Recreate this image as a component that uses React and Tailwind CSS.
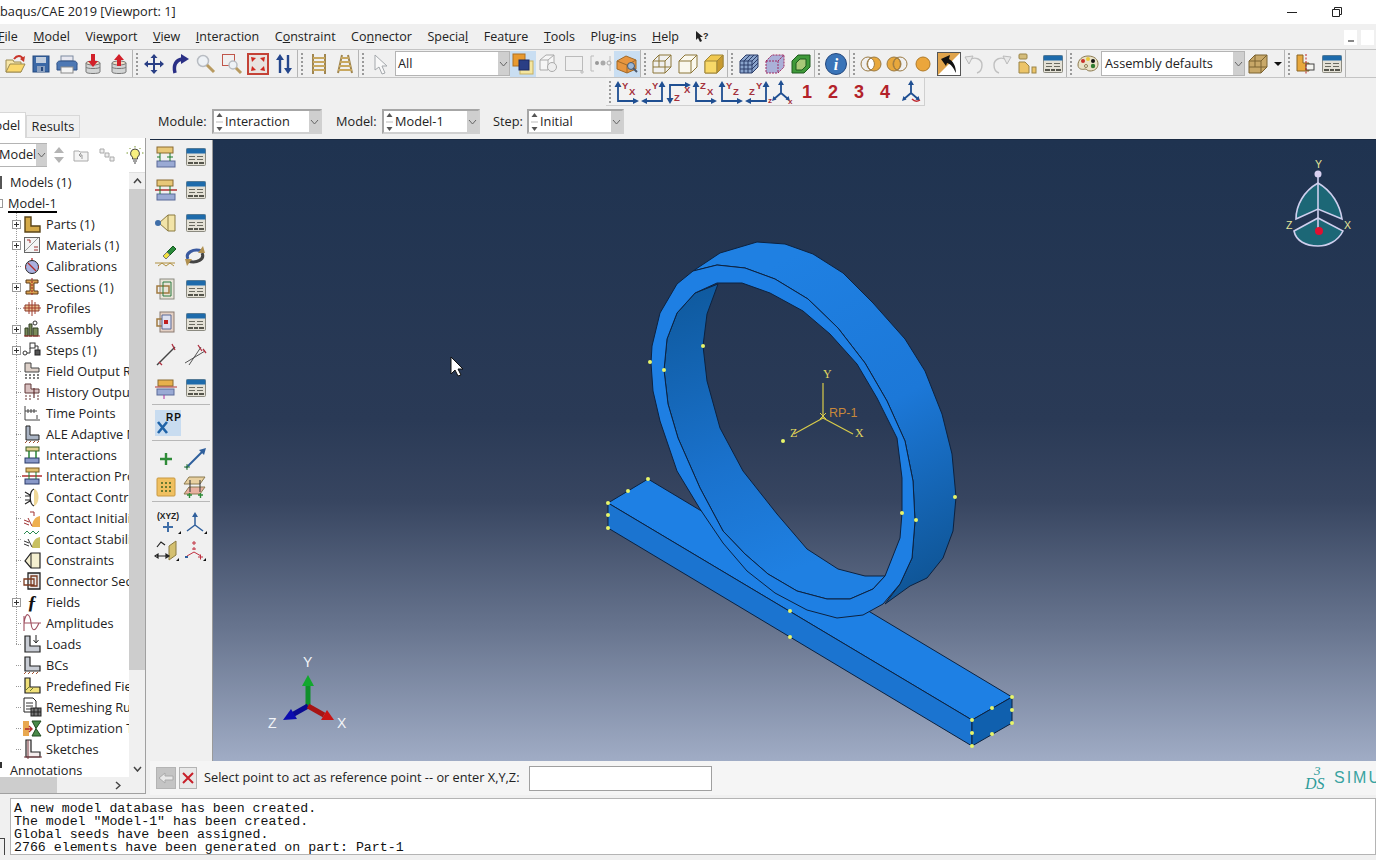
import React from 'react';

const UI = '"Open Sans", "Noto Sans", sans-serif';

const Ico = ({ w = 22, h = 22, children }) => (
  <svg width={w} height={h} viewBox={`0 0 ${w} ${h}`} className="shrink-0">{children}</svg>
);

const Table = () => (
  <Ico>
    <rect x="1.5" y="2.5" width="19" height="17" rx="1" fill="#e4e1d6" stroke="#8b8a80" />
    <rect x="1.5" y="2.5" width="19" height="5" fill="#1e6bab" />
    <path d="M4 10.500h6M12 10.500h6M4 13.500h6M12 13.500h6" stroke="#6a6a60" />
    <path d="M3 17h5M9 17h4M14 17h5" stroke="#55554c" strokeWidth="2" />
  </Ico>
);
const Open = () => (
  <Ico>
    <path d="M2 7h7l1 2h7v10H2z" fill="#f7e6a8" stroke="#9c8a50" />
    <path d="M2 19l4-8h15l-4 8z" fill="#fbd86c" stroke="#9c8a50" />
    <path d="M10 6c3-4 7-4 9 0" fill="none" stroke="#c8342a" strokeWidth="2" />
    <path d="M21 3l-1 6-4-3z" fill="#c8342a" />
  </Ico>
);
const Save = () => (
  <Ico>
    <rect x="3" y="3" width="16" height="16" fill="#3b68a6" stroke="#25487e" />
    <rect x="6" y="4" width="10" height="6" fill="#c3cfdf" />
    <rect x="7" y="13" width="8" height="6" fill="#8ba0bf" />
    <rect x="11" y="14" width="2" height="4" fill="#25487e" />
  </Ico>
);
const Print = () => (
  <Ico>
    <rect x="5" y="3" width="12" height="5" fill="#e8e8f0" stroke="#7d8aa0" />
    <path d="M1 12a3 3 0 013-4h14a3 3 0 013 4v5H1z" fill="#4d78b4" stroke="#2f5186" />
    <rect x="5" y="14" width="12" height="6" fill="#f4f4f4" stroke="#8a8a8a" />
  </Ico>
);
const Db = ({ up }) => (
  <Ico>
    <path d="M4 10v9c0 2 14 2 14 0v-9z" fill="#d2d4d4" stroke="#777" />
    <path d="M4 14c0 2 14 2 14 0" fill="none" stroke="#777" />
    <ellipse cx="11" cy="10" rx="7" ry="2" fill="#ecdcc4" stroke="#777" />
    <path d={up ? 'M11 1l5 6h-3v6H9V7H6z' : 'M9 1h4v7h3l-5 6-5-6h3z'} fill="#d2202a" />
  </Ico>
);
const Move = () => (
  <Ico>
    <path d="M11 2v18M2 11h18" stroke="#2a3f85" strokeWidth="2" />
    <path d="M11 1l3.500 4h-7zM11 21l3.500-4h-7zM1 11l4-3.500v7zM21 11l-4-3.500v7z" fill="#2a3f85" />
  </Ico>
);
const Rotate = () => (
  <Ico>
    <path d="M6 20C4 12 7 7 13 6" fill="none" stroke="#2a2f85" strokeWidth="3.5" />
    <path d="M12 1l8 5-8 5z" fill="#2a2f85" />
  </Ico>
);
const Glass = () => (
  <Ico>
    <circle cx="8" cy="8" r="5.5" fill="#eef2f6" stroke="#b8bcc2" strokeWidth="1.5" />
    <path d="M12 12l7 7" stroke="#b89a60" strokeWidth="3" />
  </Ico>
);
const BoxZoom = () => (
  <Ico>
    <rect x="1.5" y="1.5" width="12" height="11" fill="none" stroke="#c0564a" />
    <circle cx="12" cy="12" r="4" fill="#eef2f6" stroke="#b8bcc2" strokeWidth="1.5" />
    <path d="M15 15l5 5" stroke="#b89a60" strokeWidth="3" />
  </Ico>
);
const Fit = () => (
  <Ico>
    <rect x="1" y="1" width="20" height="20" fill="#e8e4e0" stroke="#c44236" strokeWidth="2" />
    <path d="M4 4l5 1-4 4zM18 4l-5 1 4 4zM4 18l5-1-4-4zM18 18l-5-1 4-4z" fill="#d02a20" />
  </Ico>
);
const Swap = () => (
  <Ico>
    <path d="M7 20V5M15 2v15" stroke="#24468c" strokeWidth="2.4" />
    <path d="M7 1l4 6H3zM15 21l4-6h-8z" fill="#24468c" />
  </Ico>
);
const Ladder = ({ t }) => (
  <Ico>
    {t ? (
      <path d="M8 2L4 20M14 2l4 18" stroke="#a08650" strokeWidth="2" />
    ) : (
      <path d="M5 1v20M17 1v20" stroke="#a08650" strokeWidth="2" />
    )}
    <path d={t ? 'M7 5h8M6 9h10M5 13h12M4 17h14' : 'M5 5h12M5 9h12M5 13h12M5 17h12'} stroke="#c8a860" strokeWidth="2" />
  </Ico>
);
const Cursor = () => (
  <Ico>
    <path d="M4 2v15l4-3 3 7 3-1-3-7h5z" fill="#f8f8f8" stroke="#a4a8ac" />
  </Ico>
);
const Overlap = () => (
  <Ico>
    <rect x="8" y="8" width="13" height="13" fill="#f4e6a0" stroke="#c8b060" />
    <rect x="1" y="1" width="12" height="12" fill="#e89a30" stroke="#b07020" />
    <rect x="7" y="7" width="10" height="10" fill="#2a3f85" stroke="#1a2860" />
  </Ico>
);
const GreyCube = () => (
  <Ico>
    <path d="M2 7l6-5h8v9l-6 6H2zM2 7h8v10M10 7l6-5" fill="#f6f6f6" stroke="#aaa" />
    <circle cx="14" cy="14" r="4.5" fill="#eee" stroke="#aaa" />
  </Ico>
);
const DashRect = () => (
  <Ico>
    <rect x="1.5" y="3.5" width="17" height="14" fill="none" stroke="#bbb" />
    <path d="M18 17v4M16 19h4" stroke="#bbb" />
  </Ico>
);
const NodesG = () => (
  <Ico>
    <path d="M1 3v15M1 3h3M1 18h3M20 3v15" stroke="#bbb" fill="none" />
    <circle cx="7" cy="10" r="2" fill="#999" />
    <circle cx="13" cy="10" r="2.5" fill="#aaa" />
    <circle cx="19" cy="10" r="2" fill="#eee" stroke="#aaa" />
  </Ico>
);
const OrangeBox = () => (
  <Ico>
    <path d="M1 8l9-5 10 4v9l-9 4-10-4z" fill="#e89640" stroke="#a06a2a" />
    <path d="M1 8l10 4 9-5M11 12v8" fill="none" stroke="#a06a2a" />
    <circle cx="15" cy="13" r="3.5" fill="#9cb8d8" stroke="#4a5a70" />
    <path d="M17 15l4 4" stroke="#4a5a70" strokeWidth="2" />
  </Ico>
);
const WireCube = () => (
  <Ico>
    <path d="M2 8l6-6h12v12l-6 6H2zM2 8h12v12M14 8l6-6M8 2v12H2M8 14h12" fill="none" stroke="#8c7638" />
  </Ico>
);
const HideCube = () => (
  <Ico>
    <path d="M2 8l6-6h12v12l-6 6H2zM2 8h12v12M14 8l6-6" fill="#faf8ee" stroke="#8c7638" />
  </Ico>
);
const ShadeCube = () => (
  <Ico>
    <path d="M2 8l6-6h12v12l-6 6H2z" fill="#f0c850" stroke="#a08638" />
    <path d="M2 8h12v12H2z" fill="#f8d868" stroke="#a08638" />
    <path d="M14 8l6-6v12l-6 6z" fill="#c89a30" stroke="#a08638" />
  </Ico>
);
const MeshCube = () => (
  <Ico>
    <path d="M2 8l6-6h12v12l-6 6H2z" fill="#8aa4cc" stroke="#2a3c68" />
    <path d="M2 8h12v12M14 8l6-6M6 8v12M10 8v12M2 12h12M2 16h12M14 12l6-6M14 16l6-6M6 8l6-6M10 8l6-6" fill="none" stroke="#2a3c68" />
  </Ico>
);
const DashCube = () => (
  <Ico>
    <path d="M2 8l6-6h12v12l-6 6H2z" fill="#aab0d8" stroke="#a02860" strokeDasharray="2 1" />
    <path d="M2 8h12v12M14 8l6-6" fill="none" stroke="#a02860" strokeDasharray="2 1" />
  </Ico>
);
const GreenCube = () => (
  <Ico>
    <path d="M2 8l6-6h12v12l-6 6H2z" fill="#3f9a3a" stroke="#1f5a1e" />
    <path d="M6 10l4-4h6v7l-4 4H6z" fill="#a8c878" stroke="#1f5a1e" />
  </Ico>
);
const Info = () => (
  <svg width="24" height="24" viewBox="0 0 24 24" className="shrink-0">
    <circle cx="12" cy="12" r="10.5" fill="#3a74b8" stroke="#24487e" />
    <text x="12" y="18" textAnchor="middle" fontSize="16" fontWeight="700" fontStyle="italic" fill="#fff" fontFamily="Liberation Serif, serif">i</text>
  </svg>
);
const Rings = ({ m }) => (
  <Ico>
    <circle cx="8" cy="11" r="7" fill={m === 'l' ? '#e8a83c' : 'none'} stroke="#9a7a44" />
    <circle cx="14" cy="11" r="7" fill={m === 'r' ? '#e8a83c' : 'none'} stroke="#9a7a44" />
    <path d="M11 5a7 7 0 010 12 7 7 0 010-12z" fill={m === 'r' ? '#fff' : '#e8a83c'} stroke="#9a7a44" />
  </Ico>
);
const Ball = () => (
  <Ico>
    <circle cx="11" cy="11" r="7" fill="#eba63c" stroke="#b07a28" />
  </Ico>
);
const PickArrow = () => (
  <Ico w={24} h={24}>
    <rect x="0.5" y="0.5" width="23" height="23" fill="#fff" stroke="#555" />
    <path d="M1 1h22L1 23z" fill="#e0a44c" />
    <path d="M4 7l9-4-1 4c4 2 7 7 7 14-3-6-5-9-9-10l-1 3z" fill="#111" />
  </Ico>
);
const Undo = ({ r }) => (
  <Ico>
    <g transform={r ? 'matrix(-1 0 0 1 22 0)' : ''}>
      <path d="M5 7c6-4 13-1 13 5 0 4-2 7-5 8" fill="none" stroke="#c0c0c0" strokeWidth="1.4" />
      <path d="M1 4l8-1-4 8z" fill="#e8e8e8" stroke="#bbb" />
    </g>
  </Ico>
);
const Parts = () => (
  <Ico>
    <rect x="3" y="1" width="8" height="5" rx="1" fill="#d4bc7a" stroke="#9a8448" />
    <path d="M3 9h6l4 4v7H3z" fill="#ecc468" stroke="#9a8448" />
    <rect x="16" y="14" width="4" height="6" fill="#ecc468" stroke="#9a8448" />
  </Ico>
);
const Palette = () => (
  <Ico>
    <path d="M11 3c6 0 10 3 10 8 0 4-3 7-8 7-3 0-3-2-5-2-3 1-7 0-7-4 0-5 4-9 10-9z" fill="#e9e2c8" stroke="#8c7a50" />
    <circle cx="6" cy="8" r="2" fill="#c8302a" />
    <circle cx="11" cy="6" r="2" fill="#e8c83a" />
    <circle cx="16" cy="8" r="2" fill="#111" />
    <circle cx="16" cy="13" r="2.2" fill="#2f7a30" />
    <circle cx="9" cy="13" r="1.5" fill="#f6f0dc" stroke="#8c7a50" />
  </Ico>
);
const TanCube = () => (
  <Ico>
    <path d="M2 8l6-6h12v12l-6 6H2z" fill="#c8a868" stroke="#7a6230" />
    <path d="M2 8h12v12M14 8l6-6M8 2v12H2M8 14h12" fill="none" stroke="#7a6230" />
  </Ico>
);
const Caret = () => (
  <svg width="13" height="22" viewBox="0 0 13 22" className="shrink-0"><path d="M3 9h8l-4 4z" fill="#111" /></svg>
);
const LCut = () => (
  <Ico>
    <path d="M2 2h6v8h6v8H2z" fill="#e8a83c" stroke="#8a6424" />
    <rect x="11" y="11" width="8" height="6" fill="#f4f4f0" stroke="#444" />
    <path d="M11 1v20" stroke="#c02020" strokeDasharray="2 1.5" />
  </Ico>
);
const AxisIco = ({ d, head, a, b }) => (
  <svg width="26" height="24" viewBox="0 0 26 24" className="shrink-0">
    <path d={d} fill="none" stroke="#1f4f92" strokeWidth="1.8" />
    <path d={head} fill="#1f4f92" />
    <text x={a[1]} y={a[2]} fontSize="9.5" fontWeight="700" fill="#a4303c" fontFamily="Liberation Sans, sans-serif">{a[0]}</text>
    <text x={b[1]} y={b[2]} fontSize="9.5" fontWeight="700" fill="#a4303c" fontFamily="Liberation Sans, sans-serif">{b[0]}</text>
  </svg>
);
const Tri3 = ({ twist }) => (
  <svg width="26" height="24" viewBox="0 0 26 24" className="shrink-0">
    <path d="M13 3v11M13 13l-7 6M13 13l7 6" stroke="#1f4f92" strokeWidth="1.8" />
    <path d="M13 0l3 5h-6zM4 21l1.500-5 3 3.500zM22 21l-1.500-5-3 3.500z" fill="#1f4f92" />
    {twist ? (
      <path d="M14 19c3 3 5 3 8 1" fill="none" stroke="#c02a30" strokeWidth="1.5" />
    ) : (
      <>
        <text x="0" y="23" fontSize="8" fontWeight="700" fill="#a4303c" fontFamily="Liberation Sans, sans-serif">z</text>
        <text x="20" y="24" fontSize="8" fontWeight="700" fill="#a4303c" fontFamily="Liberation Sans, sans-serif">x</text>
      </>
    )}
  </svg>
);

const Grip = () => (
  <div className="w-[8px] h-full flex flex-col items-center justify-center gap-[2px] shrink-0">
    {[0, 1, 2, 3, 4, 5].map((i) => <i key={i} className="block w-[2px] h-[2px] bg-[#9a9a9a]" />)}
  </div>
);
const Btn = ({ on, children }) => (
  <div className={`w-[26px] h-[26px] flex items-center justify-center shrink-0 ${on ? 'bg-[#c9def2]' : ''}`}>{children}</div>
);
const Group = ({ children, className = '' }) => (
  <div className={`flex items-center h-full border-r border-[#b5b5b5] ${className}`}>{children}</div>
);
const Arrow = () => (
  <div className="w-[11px] h-full bg-[#cfcfcf] flex items-center justify-center shrink-0">
    <svg width="9" height="6" viewBox="0 0 9 6"><path d="M1 1l3.500 4L8 1" fill="none" stroke="#666" /></svg>
  </div>
);
const Spin = () => (
  <svg width="9" height="22" viewBox="0 0 9 22" className="shrink-0 ml-[1px]">
    <path d="M4.500 2l3 4h-6zM4.500 20l3-4h-6z" fill="#555" />
    <path d="M1 11h7" stroke="#bbb" />
  </svg>
);
const Combo = ({ w, label }) => (
  <div className={`${w} h-[25px] flex items-center bg-white border-2 border-[#a6a6a6] border-r-[#d0d0d0] border-b-[#d0d0d0]`}>
    <Spin />
    <span className="ml-[1px] flex-1 whitespace-nowrap">{label}</span>
    <Arrow />
  </div>
);

const Dots = () => <i className="absolute left-[16px] top-[10px] w-[9px] border-t border-dotted border-[#999]" />;

const treeIcons = {
  parts: <path d="M3 3h6v9h9v6H3z" fill="#d4a948" stroke="#5a4418" strokeWidth="1.4" />,
  mat: (
    <>
      <rect x="2.5" y="2.5" width="15" height="15" fill="#f4f4f4" stroke="#666" />
      <path d="M3 16l13-13" stroke="#999" />
      <path d="M5 5h3v3M12 12h4M12 15h4" stroke="#a03030" fill="none" />
    </>
  ),
  cal: (
    <>
      <circle cx="10" cy="11" r="6.5" fill="#aab0e0" stroke="#222" />
      <path d="M6 7l8 8M10 2v2M3 11h1M16 11h1" stroke="#b02a2a" strokeWidth="1.3" />
    </>
  ),
  sec: (
    <>
      <path d="M4 3h12v3h-4v8h4v3H4v-3h4V6H4z" fill="#d9a050" stroke="#5a3a18" />
      <path d="M10 1v18" stroke="#a02020" strokeDasharray="2 1" />
    </>
  ),
  prof: (
    <>
      <path d="M3 7h14v6H3z" fill="#e8c090" stroke="#8a3a2a" />
      <path d="M10 2v16M1 10h18M7 4v12M13 4v12" stroke="#a03a2a" />
    </>
  ),
  asm: (
    <>
      <path d="M3 17V9h3v8zM7 17V5h3v12zM11 17V9h5v8z" fill="#7a8a5a" stroke="#2f3a20" />
      <circle cx="13" cy="4" r="2" fill="#fff" stroke="#333" />
      <path d="M2 17h16" stroke="#a03030" />
    </>
  ),
  steps: (
    <>
      <circle cx="3" cy="13" r="2" fill="#fff" stroke="#333" />
      <rect x="8" y="3" width="5" height="5" fill="#fff" stroke="#333" />
      <rect x="13" y="10" width="5" height="5" fill="#555" stroke="#222" />
      <path d="M5 13h3V8M13 6h3v4" fill="none" stroke="#333" />
    </>
  ),
  field: (
    <>
      <path d="M3 2h6v5h8v4H3z" fill="#ddd0c8" stroke="#444" />
      <path d="M3 14h2M7 14h2M11 14h2M15 14h2M3 17h2M7 17h2M11 17h2M15 17h2" stroke="#555" strokeWidth="1.4" />
    </>
  ),
  hist: (
    <>
      <path d="M3 2h6v5h8v4H3z" fill="#d8c0c0" stroke="#603838" />
      <path d="M12 6v10M3 14h2M7 14h2M15 14h2M3 17h2M7 17h2M15 17h2" stroke="#633" strokeWidth="1.2" />
    </>
  ),
  time: <path d="M3 3v14h15M3 8h12M6 6v4M9 6v4M12 6v4M15 12v4" fill="none" stroke="#444" />,
  ale: (
    <>
      <path d="M4 2h4v9h9v5H4z" fill="#aab4c4" stroke="#222" />
      <path d="M3 19l2-2M7 19l2-2M11 19l2-2M15 19l2-2" stroke="#a05030" />
    </>
  ),
  inter: (
    <>
      <rect x="4" y="2" width="13" height="4" fill="#e0d090" stroke="#3a5a20" />
      <rect x="3" y="13" width="14" height="5" fill="#8898c8" stroke="#2a3a68" />
      <path d="M7 6v7M14 6v7" stroke="#1a7a2a" strokeWidth="1.4" />
    </>
  ),
  iprop: (
    <>
      <rect x="4" y="2" width="13" height="4" fill="#e0c070" stroke="#7a5a20" />
      <rect x="3" y="13" width="14" height="5" fill="#8898c8" stroke="#2a3a68" />
      <path d="M0 10h20" stroke="#b03030" strokeWidth="1.5" />
      <path d="M7 6v7M14 6v7" stroke="#1a7a2a" />
    </>
  ),
  cc: (
    <>
      <path d="M12 2c6 1 6 15 0 17z" fill="#f0d898" />
      <path d="M12 2c-5 2-5 15 0 17M3 5l5 3M3 9h5M3 13h5M3 17l5-3" fill="none" stroke="#222" strokeWidth="1.2" />
    </>
  ),
  ci: (
    <>
      <path d="M10 19c0-6 3-10 8-11v11z" fill="#eeb050" />
      <path d="M2 12l5 2M2 15l5 2M6 10l4 8M8 4h4v4" fill="none" stroke="#a03030" />
    </>
  ),
  cs: (
    <>
      <path d="M10 19c0-6 3-10 8-11v11z" fill="#c8c060" />
      <path d="M2 5l3-3 3 3 3-3 3 3 3-3" fill="none" stroke="#2a8a50" />
      <path d="M2 12l5 2M2 15l5 2M6 10l4 8" stroke="#333" />
    </>
  ),
  cons: (
    <>
      <path d="M9 3h9v15H9L3 11z" fill="#f4efd0" stroke="#222" strokeWidth="1.2" />
      <path d="M9 3v15" stroke="#222" />
    </>
  ),
  conn: (
    <>
      <path d="M6 2h12v16H6z" fill="#e8e8e8" stroke="#222" strokeWidth="1.3" />
      <path d="M2 8h10v6H2zM9 5h6v10H9z" fill="none" stroke="#7a3a20" strokeWidth="1.3" />
    </>
  ),
  fields: <text x="10" y="17" textAnchor="middle" fontSize="19" fontWeight="700" fontStyle="italic" fill="#111" fontFamily="Liberation Serif, serif">ƒ</text>,
  amp: <path d="M2 10c2-13 6-9 7 0s4 9 8 0M2 3v15M2 10h17" fill="none" stroke="#a05060" strokeWidth="1.1" />,
  loads: (
    <>
      <path d="M3 2h5v10h10v6H3z" fill="#c8ccd4" stroke="#222" strokeWidth="1.2" />
      <path d="M14 1v7M11.500 6l2.500 3 2.500-3" fill="none" stroke="#222" />
    </>
  ),
  bcs: (
    <>
      <path d="M3 2h5v9h10v5H3z" fill="#c8ccd4" stroke="#222" strokeWidth="1.2" />
      <path d="M2 19l2-2M6 19l2-2M10 19l2-2M14 19l2-2" stroke="#a05030" />
    </>
  ),
  pre: (
    <>
      <path d="M3 2h5v9h10v6H3z" fill="#f0e078" stroke="#222" strokeWidth="1.2" />
      <path d="M4 14l3-3M8 15l3-3" stroke="#6a7a30" />
    </>
  ),
  rem: (
    <>
      <path d="M2 1h9l3 3v11H2z" fill="#fff" stroke="#222" />
      <path d="M4 6h7M4 9h7M4 12h7" stroke="#333" />
      <rect x="9" y="11" width="10" height="8" fill="#777" stroke="#222" />
      <path d="M12 11v8M16 11v8M9 15h10" stroke="#222" />
    </>
  ),
  opt: (
    <>
      <rect x="1" y="3" width="6" height="15" fill="#e8a850" />
      <path d="M3 11h6M7 8l3 3-3 3" stroke="#b02a2a" fill="none" strokeWidth="1.4" />
      <path d="M10 3h9l-5 7.500 5 7.500h-9l4-7.500z" fill="#4a8a4a" stroke="#1f4a1f" />
    </>
  ),
  sk: (
    <>
      <path d="M4 1h5v12h9v5H4z" fill="#f4ecec" stroke="#222" strokeWidth="1.2" />
      <path d="M6 1v19M2 18h18" stroke="#7a3a40" />
    </>
  ),
};

const treeRows = [
  { t: 'Parts (1)', i: 'parts', x: 1 }, { t: 'Materials (1)', i: 'mat', x: 1 }, { t: 'Calibrations', i: 'cal' },
  { t: 'Sections (1)', i: 'sec', x: 1 }, { t: 'Profiles', i: 'prof' }, { t: 'Assembly', i: 'asm', x: 1 },
  { t: 'Steps (1)', i: 'steps', x: 1 }, { t: 'Field Output Requests', i: 'field' }, { t: 'History Output Requests', i: 'hist' },
  { t: 'Time Points', i: 'time' }, { t: 'ALE Adaptive Mesh Constraints', i: 'ale' }, { t: 'Interactions', i: 'inter' },
  { t: 'Interaction Properties', i: 'iprop' }, { t: 'Contact Controls', i: 'cc' }, { t: 'Contact Initializations', i: 'ci' },
  { t: 'Contact Stabilizations', i: 'cs' }, { t: 'Constraints', i: 'cons' }, { t: 'Connector Sections', i: 'conn' },
  { t: 'Fields', i: 'fields', x: 1 }, { t: 'Amplitudes', i: 'amp' }, { t: 'Loads', i: 'loads' }, { t: 'BCs', i: 'bcs' },
  { t: 'Predefined Fields', i: 'pre' }, { t: 'Remeshing Rules', i: 'rem' }, { t: 'Optimization Tasks', i: 'opt' }, { t: 'Sketches', i: 'sk' },
];

const Plus = ({ className = '' }) => (
  <i className={`absolute top-[6px] w-[9px] h-[9px] border border-[#999] bg-white flex items-center justify-center ${className}`}>
    <svg width="7" height="7" viewBox="0 0 7 7"><path d="M1 3.500h5M3.500 1v5" stroke="#333" /></svg>
  </i>
);

const Tree = () => (
  <div className="flex-1 overflow-hidden relative">
    <i className="absolute left-[16px] top-[36px] h-[436px] border-l border-dotted border-[#999]" />
    <div className="h-[21px] flex items-center pl-[10px] relative">
      <i className="absolute left-0 top-[4px] w-[2px] h-[13px] bg-[#555]" />
      Models (1)
    </div>
    <div className="h-[21px] flex items-center pl-[8px] relative">
      <i className="absolute left-0 top-[6px] w-[3px] h-[9px] border border-l-0 border-[#999]" />
      <span className="border-b-2 border-black leading-[16px]">Model-1</span>
    </div>
    {treeRows.map((r) => (
      <div key={r.t} className="h-[21px] relative flex items-center pl-[46px] whitespace-nowrap">
        <Dots />
        {r.x ? <Plus className="left-[12px]" /> : null}
        <svg width="20" height="20" viewBox="0 0 20 20" className="absolute left-[22px] top-[0px] bg-white">{treeIcons[r.i]}</svg>
        {r.t}
      </div>
    ))}
    <div className="h-[21px] flex items-center pl-[10px] relative">
      <i className="absolute left-0 top-[2px] w-[2px] h-[6px] bg-[#333]" />
      Annotations
    </div>
  </div>
);

const RP = () => (
  <svg width="26" height="26" viewBox="0 0 26 26">
    <rect width="26" height="26" fill="#c8dcf0" />
    <text x="11" y="11" fontSize="10" fontWeight="700" fill="#111" fontFamily="Liberation Sans, sans-serif" letterSpacing="1">RP</text>
    <path d="M3 12l9 11M12 12l-9 11" stroke="#1f63a8" strokeWidth="2.6" />
  </svg>
);

const tool = {
  int: (
    <Ico w={24} h={24}>
      <rect x="3" y="2" width="16" height="6" fill="#e8c878" stroke="#8a6a30" />
      <rect x="3" y="16" width="18" height="6" fill="#9aaad4" stroke="#5a6a98" />
      <path d="M6 8v8M16 8v8M3 12h3M13 12h6" stroke="#1a7a2a" />
    </Ico>
  ),
  prop: (
    <Ico w={24} h={24}>
      <rect x="3" y="2" width="16" height="6" fill="#e8c878" stroke="#8a6a30" />
      <rect x="3" y="16" width="18" height="6" fill="#9aaad4" stroke="#5a6a98" />
      <path d="M1 12h22" stroke="#b03030" strokeWidth="1.5" />
      <path d="M6 8v8M16 8v8" stroke="#1a7a2a" />
    </Ico>
  ),
  cons: (
    <Ico w={24} h={24}>
      <path d="M14 4h7v16h-7L5 12z" fill="#f2e4a8" stroke="#8a7a40" />
      <circle cx="4" cy="12" r="3" fill="#3f6ea8" />
      <path d="M14 4v16" stroke="#8a7a40" />
    </Ico>
  ),
  flash: (
    <Ico w={24} h={24}>
      <path d="M13 8l6-6 3 3-6 6z" fill="#2a8a3a" stroke="#155a20" />
      <path d="M9 12l4-4 3 3-4 4z" fill="#f0e040" stroke="#777" />
      <path d="M1 19h20M4 22l4-3 4 3 4-3 4 3" fill="none" stroke="#b09040" />
    </Ico>
  ),
  cycle: (
    <Ico w={24} h={24}>
      <path d="M5 15c-3-6 5-11 14-8" fill="none" stroke="#3a5aa0" strokeWidth="3" />
      <path d="M19 9c3 6-5 11-14 8" fill="none" stroke="#444" strokeWidth="3" />
      <path d="M20 2l2 7-7 0z" fill="#b09050" />
      <path d="M4 22l-2-7 7 0z" fill="#b09050" />
    </Ico>
  ),
  conn1: (
    <Ico w={24} h={24}>
      <rect x="6" y="2" width="14" height="20" fill="#e8e4d8" stroke="#8a8a80" />
      <path d="M3 9h12v7H3z" fill="none" stroke="#a07a40" strokeWidth="1.5" />
      <path d="M9 5h8v14H9z" fill="none" stroke="#2a7a40" />
    </Ico>
  ),
  conn2: (
    <Ico w={24} h={24}>
      <rect x="6" y="2" width="14" height="20" fill="#e4d0c4" stroke="#8a7a70" />
      <path d="M3 9h12v7H3z" fill="none" stroke="#a07a40" strokeWidth="1.5" />
      <path d="M8 5h9v14H8z" fill="#dde0f0" stroke="#5a6a98" />
      <rect x="10" y="10" width="4" height="4" fill="#c02020" />
    </Ico>
  ),
  wire1: (
    <Ico w={24} h={24}>
      <path d="M3 22L21 4" stroke="#444" strokeWidth="1.4" />
      <path d="M18 1l3 6M5 19l3 3" stroke="#b03040" strokeWidth="1.3" />
    </Ico>
  ),
  wire2: (
    <Ico w={24} h={24}>
      <path d="M2 20L22 8M6 22L18 4" stroke="#555" />
      <path d="M15 2l4 6M20 6l3 4" stroke="#b03040" strokeWidth="1.3" />
    </Ico>
  ),
  beam: (
    <Ico w={24} h={24}>
      <rect x="4" y="4" width="15" height="6" fill="#e8b04c" stroke="#8a6a30" />
      <rect x="3" y="13" width="17" height="6" fill="#9aaad4" stroke="#5a6a98" />
      <path d="M1 11h22" stroke="#b03030" />
      <path d="M10 19v4" stroke="#b030a0" />
    </Ico>
  ),
  plus: (
    <Ico w={24} h={24}>
      <path d="M12 6v12M6 12h12" stroke="#2e8b38" strokeWidth="2.4" />
    </Ico>
  ),
  line: (
    <Ico w={24} h={24}>
      <path d="M3 21L20 4" stroke="#2f5f9c" strokeWidth="2" />
      <path d="M23 1l-7 2 5 5z" fill="#2f5f9c" />
      <path d="M1 20h6M4 17v6" stroke="#2e7b38" />
    </Ico>
  ),
  grid: (
    <Ico w={24} h={24}>
      <rect x="3" y="3" width="18" height="18" rx="1" fill="#f0c060" stroke="#c89840" />
      <path d="M7 8h2M11 8h2M15 8h2M7 12h2M11 12h2M15 12h2M7 16h2M11 16h2M15 16h2" stroke="#6a7a30" strokeWidth="2" />
    </Ico>
  ),
  plates: (
    <Ico w={24} h={24}>
      <path d="M6 2h16l-5 7H1z" fill="#e8d0a0" stroke="#8a7a50" />
      <path d="M6 12h16l-5 7H1z" fill="#e8b0a0" stroke="#8a7a50" />
      <path d="M7 5v12M17 5v12" stroke="#333" />
      <path d="M4 20h5M15 20h5M6.500 18v5M17.500 18v5" stroke="#2e8b38" strokeWidth="1.4" />
    </Ico>
  ),
  xyz: (
    <svg width="28" height="24" viewBox="0 0 28 24">
      <text x="14" y="8" textAnchor="middle" fontSize="8.5" fontWeight="700" fill="#222" fontFamily="Liberation Sans, sans-serif">(XYZ)</text>
      <path d="M14 11v10M9 16h10" stroke="#3f6ea8" strokeWidth="2" />
      <path d="M24 23h3v-3z" fill="#111" />
    </svg>
  ),
  csys: (
    <svg width="26" height="24" viewBox="0 0 26 24">
      <path d="M13 4v11M13 14l-8 6M13 14l8 6" stroke="#2f5f9c" strokeWidth="1.5" />
      <path d="M13 1l3 5h-6z" fill="#2f5f9c" />
      <path d="M22 23h3v-3z" fill="#111" />
    </svg>
  ),
  plane: (
    <svg width="26" height="24" viewBox="0 0 26 24">
      <path d="M15 8l7-5v14l-7 5z" fill="#d4c070" stroke="#8a7a40" />
      <path d="M3 9l4-5 4 3M3 18h11M1 18l3-2v4zM15 18l-3-2v4z" fill="none" stroke="#222" strokeWidth="1.2" />
      <path d="M22 23h3v-3z" fill="#111" />
    </svg>
  ),
  csys2: (
    <svg width="26" height="24" viewBox="0 0 26 24">
      <path d="M13 3v4M11 5h4M13 9v3M11 11h4M13 14l-7 4M13 14l7 4" stroke="#c03040" />
      <path d="M17 19h5M19.500 16.500v5" stroke="#c03040" />
      <path d="M4 19h3" stroke="#2f5f9c" strokeWidth="2" />
      <path d="M22 23h3v-3z" fill="#111" />
    </svg>
  ),
};

const Row = ({ h, children }) => <div className={`${h} flex items-center justify-between pl-[4px] pr-[5px]`}>{children}</div>;
const Sep = ({ className }) => <div className={`h-px bg-[#b8b8b8] mx-[2px] ${className}`} />;

const Viewport = () => (
  <div className="flex-1 bg-[linear-gradient(180deg,#1f3350_0%,#2a3a56_45%,#374560_58%,#66738d_78%,#a0acc5_100%)]">
    <svg width="1163" height="621" viewBox="213 139 1163 621" className="block">
      <defs>
        <linearGradient id="outerBand" gradientUnits="userSpaceOnUse" x1="780" y1="260" x2="950" y2="570">
          <stop offset="0" stopColor="#1f80e2" />
          <stop offset="0.5" stopColor="#1c78d8" />
          <stop offset="1" stopColor="#0f5596" />
        </linearGradient>
        <linearGradient id="innerBand" gradientUnits="userSpaceOnUse" x1="690" y1="290" x2="790" y2="570">
          <stop offset="0" stopColor="#0f5a9f" />
          <stop offset="0.6" stopColor="#1a72cd" />
          <stop offset="1" stopColor="#1f80e2" />
        </linearGradient>
      </defs>
      <g stroke="#0c2240" strokeWidth="1" strokeLinejoin="round">
        <path d="M648 478L608 502L972 719L1012 696Z" fill="#1e80e4" />
        <path d="M608 502V527L972 745V719Z" fill="#1b74d0" />
        <path d="M972 719L1012 696V722L972 745Z" fill="#1060ae" />
        <path d="M693 270L720 252L757 241L785 243L813 253L843 272L873 302L905 338L925 370L942 413L952 453L956 496L953 530L943 557L927 577L910 585L885 603L900 583L912 557L915 520L913 480L905 440L887 400L865 362L838 327L808 298L775 278L745 267L717 264Z" fill="url(#outerBand)" />
        <path d="M718 283L695 292L677 312L667 338L664 369L668 403L678 437L700 487L723 530L745 553L768 573L797 590L827 598L850 598L873 588L885 575L865 575L838 568L807 548L777 513L743 470L720 427L707 380L703 345L707 313Z" fill="url(#innerBand)" />
        <path fillRule="evenodd" d="M693 270L717 264L745 267L775 278L808 298L838 327L865 362L887 400L905 440L913 480L915 520L912 557L900 583L883 603L863 614L837 617L807 609L775 592L747 570L723 542L700 508L677 470L660 420L653 390L651 362L652 345L660 312L677 283ZM717 282L695 292L677 312L667 338L664 369L668 403L678 437L700 487L723 530L745 553L768 573L797 590L827 598L850 598L873 588L885 575L900 537L902 512L902 477L897 437L877 397L857 363L830 333L803 310L770 292L742 282Z" fill="#1e7fe3" />
      </g>
      <g fill="#e8f56a">
        {[[650, 361], [664, 369], [703, 345], [955, 496], [902, 512], [916, 519], [648, 478], [628, 490], [608, 502], [608, 514], [608, 527], [790, 610], [790, 636], [972, 719], [972, 732], [972, 745], [992, 707], [992, 733], [1012, 696], [1012, 709], [1012, 722], [783, 440]].map(([x, y]) => (
          <circle key={`${x}-${y}`} cx={x} cy={y} r="2" />
        ))}
      </g>
      <path d="M823 382V417M823 417L794 433M823 417L853 433" stroke="#d9cc4a" strokeWidth="1.2" fill="none" />
      <path d="M820 412l6 6M826 412l-6 6" stroke="#d9cc4a" />
      <g fontFamily="Liberation Serif, serif" fontSize="12" fill="#e0d860">
        <text x="823" y="377">Y</text>
        <text x="790" y="436">Z</text>
        <text x="855" y="436">X</text>
      </g>
      <text x="829" y="416" fontFamily="Liberation Sans, sans-serif" fontSize="12.5" fill="#c8883a">RP-1</text>

      <path d="M451 356v17l4-4 3 6 3-1-3-6h5z" fill="#fff" stroke="#111" />

      <g fontFamily="Liberation Sans, sans-serif" fontSize="14" fill="#f2f4f8">
        <text x="303" y="666">Y</text>
        <text x="268" y="727">Z</text>
        <text x="337" y="727">X</text>
      </g>
      <path d="M308 705V683" stroke="#0f8f2a" strokeWidth="5" />
      <path d="M308 674l6 11h-12z" fill="#12a82e" />
      <path d="M308 705L292 714" stroke="#0a0a90" strokeWidth="5" />
      <path d="M283 719l8-11 6 10z" fill="#0c0cb0" />
      <path d="M308 705L324 714" stroke="#a81414" strokeWidth="5" />
      <path d="M334 719l-13 0 6-10z" fill="#c81414" />

      <g stroke="#cfcfee" strokeWidth="1.6" fill="#1c6776">
        <path d="M1318 182C1304 190 1296 204 1296 218L1318 208L1342 218C1340 204 1332 190 1318 182Z" />
        <path d="M1294 230L1318 217L1343 230C1338 240 1328 245 1318 245C1306 245 1296 240 1294 230Z" />
        <path d="M1318 175V230" fill="none" />
      </g>
      <circle cx="1318" cy="173" r="3.5" fill="#d8d0f0" />
      <circle cx="1319" cy="230" r="4" fill="#e01030" />
      <g fontFamily="Liberation Sans, sans-serif" fontSize="10.5" fill="#e4e69a">
        <text x="1315" y="167">Y</text>
        <text x="1286" y="228">Z</text>
        <text x="1344" y="228">X</text>
      </g>
    </svg>
  </div>
);

export default function App() {
  return (
    <div className="w-[1376px] h-[860px] overflow-hidden flex flex-col bg-[#f0f0f0] text-[12.75px] text-[#222]" style={{ fontFamily: UI }}>
      <div className="h-[24px] bg-white flex items-center overflow-hidden shrink-0 relative">
        <span className="-ml-[8px] whitespace-nowrap">Abaqus/CAE 2019 [Viewport: 1]</span>
        <div className="ml-auto flex items-center gap-[35px] mr-[34px]">
          <i className="block w-[10px] h-px bg-[#222]" />
          <svg width="10" height="10" viewBox="0 0 10 10"><path d="M.5 2.500h7v7h-7zM2.500 2.500v-2h7v7h-2" fill="none" stroke="#222" /></svg>
        </div>
      </div>

      <div className="h-[25px] flex items-center gap-[15.5px] shrink-0 relative text-[12.5px] pt-[1px]">
        <span className="-ml-[2px]"><u>F</u>ile</span>
        <span><u>M</u>odel</span>
        <span>Vie<u>w</u>port</span>
        <span><u>V</u>iew</span>
        <span><u>I</u>nteraction</span>
        <span>C<u>o</u>nstraint</span>
        <span>Co<u>n</u>nector</span>
        <span>Specia<u>l</u></span>
        <span>Feat<u>u</u>re</span>
        <span><u>T</u>ools</span>
        <span>Plu<u>g</u>-ins</span>
        <span><u>H</u>elp</span>
        <svg width="14" height="14" viewBox="0 0 14 14" className="ml-[1px]">
          <path d="M1 1v9l2-2 2 4 2-1-2-4h3z" fill="#222" />
          <text x="8" y="9" fontSize="9" fontWeight="700" fill="#222" fontFamily="Liberation Sans, sans-serif">?</text>
        </svg>
        <div className="ml-auto mr-[2px] flex items-center gap-[4px]">
          <div className="w-[13px] h-[15px] bg-white flex items-end justify-center"><i className="block w-[6px] h-[2px] bg-[#888] mb-[3px]" /></div>
          <div className="w-[13px] h-[15px] bg-white" />
        </div>
      </div>

      <div className="h-[29px] flex items-center border-t border-b border-[#c4c4c4] shrink-0">
        <Group className="pl-[2px]">
          <Btn><Open /></Btn><Btn><Save /></Btn><Btn><Print /></Btn><Btn><Db /></Btn><Btn><Db up /></Btn>
        </Group>
        <Group>
          <Grip /><Btn><Move /></Btn><Btn><Rotate /></Btn><Btn><Glass /></Btn><Btn><BoxZoom /></Btn><Btn><Fit /></Btn><Btn><Swap /></Btn>
        </Group>
        <Group>
          <Grip /><Btn><Ladder /></Btn><Btn><Ladder t /></Btn>
        </Group>
        <Group>
          <Grip />
          <div className="ml-[2px]"><Btn><Cursor /></Btn></div>
          <div className="w-[115px] h-[25px] flex items-center bg-white border border-[#b4b4b4] pl-[2px]">
            <span className="flex-1">All</span><Arrow />
          </div>
          <Btn on><Overlap /></Btn><Btn><GreyCube /></Btn><Btn><DashRect /></Btn><Btn><NodesG /></Btn><Btn on><OrangeBox /></Btn>
        </Group>
        <Group>
          <Grip /><Btn><WireCube /></Btn><Btn><HideCube /></Btn><Btn><ShadeCube /></Btn>
        </Group>
        <Group>
          <Grip /><Btn><MeshCube /></Btn><Btn><DashCube /></Btn><Btn><GreenCube /></Btn>
        </Group>
        <Group>
          <Grip /><Btn><Info /></Btn>
        </Group>
        <Group>
          <Grip /><Btn><Rings m="r" /></Btn><Btn><Rings m="l" /></Btn><Btn><Ball /></Btn><Btn><PickArrow /></Btn><Btn><Undo /></Btn><Btn><Undo r /></Btn><Btn><Parts /></Btn><Btn><Table /></Btn>
        </Group>
        <Group>
          <Grip /><Btn><Palette /></Btn>
          <div className="w-[144px] h-[25px] flex items-center bg-white border border-[#b4b4b4] pl-[3px]">
            <span className="flex-1">Assembly defaults</span><Arrow />
          </div>
          <Btn><TanCube /></Btn><Caret />
        </Group>
        <Group>
          <Grip /><Btn><LCut /></Btn><Btn><Table /></Btn>
        </Group>
      </div>

      <div className="h-[28px] shrink-0 flex items-center">
        <div className="ml-[606px] h-full flex items-center border-r border-b border-[#d0d0d0] bg-[#f2f2f2]">
          <Grip />
          <Btn><AxisIco d="M4 6V21H20" head="M4 1l3.500 6h-7zM25 21l-6 3v-6z" a={['Y', 8, 9]} b={['X', 15, 15]} /></Btn>
          <Btn><AxisIco d="M22 6V21H6" head="M22 1l3.500 6h-7zM1 21l6 3v-6z" a={['Y', 12, 9]} b={['X', 5, 15]} /></Btn>
          <Btn><AxisIco d="M4 19V5H20" head="M4 24l3.500-6h-7zM25 5l-6-3v6z" a={['Z', 8, 21]} b={['X', 18, 13]} /></Btn>
          <Btn><AxisIco d="M4 6V21H20" head="M4 1l3.500 6h-7zM25 21l-6 3v-6z" a={['Z', 8, 9]} b={['X', 15, 15]} /></Btn>
          <Btn><AxisIco d="M4 6V21H20" head="M4 1l3.500 6h-7zM25 21l-6 3v-6z" a={['Y', 8, 9]} b={['Z', 15, 15]} /></Btn>
          <Btn><AxisIco d="M22 6V21H6" head="M22 1l3.500 6h-7zM1 21l6 3v-6z" a={['Y', 12, 9]} b={['Z', 5, 15]} /></Btn>
          <div className="-ml-[2px]"><Btn><Tri3 /></Btn></div>
          {['1', '2', '3', '4'].map((n) => (
            <Btn key={n}><span className="text-[18px] font-bold text-[#b3222a] leading-none" style={{ fontFamily: 'Liberation Sans, sans-serif' }}>{n}</span></Btn>
          ))}
          <Btn><Tri3 twist /></Btn>
        </div>
      </div>

      <div className="flex-1 flex min-h-0">
        <div className="w-[146px] shrink-0 flex flex-col">
          <div className="h-[32px] flex items-end overflow-hidden">
            <div className="-ml-[20px] w-[46px] h-[26px] bg-white border border-[#d8d8d8] border-b-0 flex items-center pl-[2px] shrink-0">Model</div>
            <div className="w-[54px] h-[23px] border border-[#d8d8d8] flex items-center justify-center shrink-0">Results</div>
          </div>
          <div className="h-[34px] bg-white border-r border-[#a0a0a0] flex items-center overflow-hidden">
            <div className="-ml-[14px] w-[61px] h-[24px] flex items-center border border-[#b4b4b4] pl-[12px] shrink-0">
              <span className="flex-1">Model</span><Arrow />
            </div>
            <svg width="12" height="18" viewBox="0 0 12 18" className="ml-[6px] shrink-0"><path d="M6 1l5 6H1zM6 17l5-6H1z" fill="#b4b4b4" /></svg>
            <svg width="16" height="14" viewBox="0 0 16 14" className="ml-[8px] shrink-0"><path d="M1 3h5l1 1h8v9H1z" fill="#f4f4f4" stroke="#aaa" /><path d="M9 11V7H6m0 0l2-2M6 7l2 2" stroke="#999" fill="none" /></svg>
            <svg width="16" height="14" viewBox="0 0 16 14" className="ml-[10px] shrink-0"><path d="M1 1h4v4H1zM6 5h4v4H6zM11 9h4v4h-4z" fill="#eee" stroke="#aaa" /></svg>
            <svg width="18" height="18" viewBox="0 0 18 18" className="ml-[11px] shrink-0"><path d="M9 3a4.500 4.500 0 00-2.500 8.200V13h5v-1.800A4.500 4.500 0 009 3z" fill="#f8f080" stroke="#444" /><path d="M7 15h4M8 17h2" stroke="#444" /><path d="M9 0v1.500M2 7H.5M17.500 7H16M3.500 2l1 1M14.500 2l-1 1" stroke="#7a9a30" /></svg>
          </div>
          <div className="h-[622px] bg-white border-r border-b border-[#a0a0a0] flex flex-col">
            <div className="flex-1 flex min-h-0">
              <Tree />
              <div className="w-[16px] flex flex-col items-center bg-[#f0f0f0] border-t border-[#e0e0e0]">
                <div className="h-[16px] flex items-center justify-center"><svg width="9" height="6" viewBox="0 0 9 6"><path d="M1 5l3.500-4L8 5" fill="none" stroke="#444" strokeWidth="1.5" /></svg></div>
                <div className="h-[481px] w-full bg-[#cdcdcd]" />
                <div className="mt-auto h-[16px] flex items-center justify-center"><svg width="9" height="6" viewBox="0 0 9 6"><path d="M1 1l3.500 4L8 1" fill="none" stroke="#444" strokeWidth="1.5" /></svg></div>
              </div>
            </div>
            <div className="h-[16px] bg-[#f0f0f0] flex items-center">
              <div className="w-[57px] h-full bg-[#cdcdcd]" />
              <svg width="6" height="9" viewBox="0 0 6 9" className="ml-[58px]"><path d="M1 1l4 3.500L1 8" fill="none" stroke="#444" strokeWidth="1.5" /></svg>
            </div>
          </div>
        </div>

        <div className="flex-1 flex flex-col min-w-0 ml-[4px]">
          <div className="h-[33px] flex items-center shrink-0 pb-[2px]">
            <span className="ml-[8px] w-[54px]">Module:</span>
            <Combo w="w-[110px]" label="Interaction" />
            <span className="ml-[14px] w-[46px]">Model:</span>
            <Combo w="w-[98px]" label="Model-1" />
            <span className="ml-[13px] w-[34px]">Step:</span>
            <Combo w="w-[97px]" label="Initial" />
          </div>
          <div className="h-[622px] flex shrink-0 border-t border-[#1a2a42]">
            <div className="w-[63px] shrink-0 border-r border-[#9a9a9a]">
              <Row h="h-[33px]"><span>{tool.int}</span><Table /></Row>
              <Row h="h-[33px]"><span>{tool.prop}</span><Table /></Row>
              <Row h="h-[33px]"><span>{tool.cons}</span><Table /></Row>
              <Row h="h-[33px]"><span>{tool.flash}</span><span>{tool.cycle}</span></Row>
              <Row h="h-[33px]"><span>{tool.conn1}</span><Table /></Row>
              <Row h="h-[33px]"><span>{tool.conn2}</span><Table /></Row>
              <Row h="h-[33px]"><span>{tool.wire1}</span><span>{tool.wire2}</span></Row>
              <Row h="h-[33px]"><span>{tool.beam}</span><Table /></Row>
              <Sep />
              <div className="pl-[5px] mt-[5px]"><RP /></div>
              <Sep className="mt-[4px]" />
              <Row h="h-[28px] mt-[4px]"><span>{tool.plus}</span><span>{tool.line}</span></Row>
              <Row h="h-[28px]"><span>{tool.grid}</span><span>{tool.plates}</span></Row>
              <Sep />
              <Row h="h-[27px] mt-[7px]"><span>{tool.xyz}</span><span>{tool.csys}</span></Row>
              <Row h="h-[27px]"><span>{tool.plane}</span><span>{tool.csys2}</span></Row>
            </div>
            <Viewport />
          </div>
          <div className="h-[34px] shrink-0 flex items-center bg-[#f5f5f5] overflow-hidden">
            <div className="ml-[6px] w-[20px] h-[22px] bg-[#c4c4c4] border border-[#b4b4b4] flex items-center justify-center">
              <svg width="16" height="12" viewBox="0 0 16 12"><path d="M1 6l6-5v3h8v4H7v3z" fill="#e8e8e8" stroke="#aaa" /></svg>
            </div>
            <div className="ml-[3px] w-[18px] h-[22px] bg-[#e8e8e8] border border-[#b4b4b4] flex items-center justify-center">
              <svg width="12" height="12" viewBox="0 0 12 12"><path d="M1 1l10 10M11 1L1 11" stroke="#c8202a" strokeWidth="2" /></svg>
            </div>
            <span className="ml-[7px] whitespace-nowrap w-[325px]">Select point to act as reference point -- or enter X,Y,Z:</span>
            <div className="w-[183px] h-[25px] bg-white border border-[#a0a0a0]" />
            <div className="ml-auto flex items-center">
              <svg width="32" height="28" viewBox="0 0 32 28" className="shrink-0">
                <text x="12" y="11" fontSize="13" fontStyle="italic" fill="#2f9c9a" fontFamily="Liberation Serif, serif">3</text>
                <text x="3" y="25" fontSize="16" fontStyle="italic" fill="#2f9c9a" fontFamily="Liberation Serif, serif">DS</text>
              </svg>
              <span className="text-[16px] tracking-[2px] text-[#3aa3a1] w-[42px] overflow-hidden whitespace-nowrap" style={{ fontFamily: 'Liberation Sans, sans-serif' }}>SIMULIA</span>
            </div>
          </div>
        </div>
      </div>

      <div className="h-[62px] shrink-0 flex items-start">
        <div className="w-[5px] h-[17px] mt-[40px] border-t border-r border-[#444]" />
        <div className="ml-[5px] flex-1 h-[57px] bg-white border border-[#b4b4b4] pl-[3px] pt-[3px] text-[13.25px] leading-[13px] text-[#111] whitespace-pre" style={{ fontFamily: '"Liberation Mono", monospace' }}>
          <div>A new model database has been created.</div>
          <div>The model "Model-1" has been created.</div>
          <div>Global seeds have been assigned.</div>
          <div>2766 elements have been generated on part: Part-1</div>
        </div>
      </div>
    </div>
  );
}
